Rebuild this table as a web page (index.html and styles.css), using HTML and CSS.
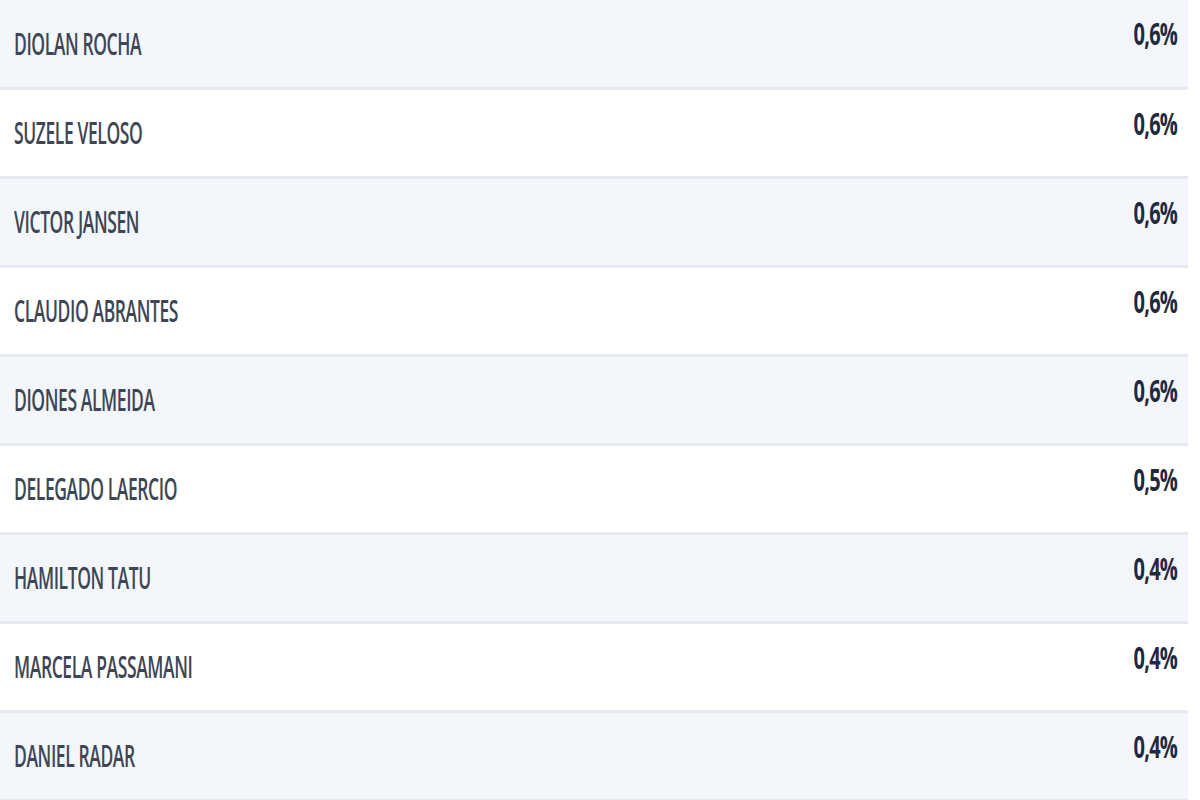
FILE: index.html
```html
<!DOCTYPE html>
<html lang="pt">
<head>
<meta charset="utf-8">
<title>Resultados</title>
<link rel="stylesheet" href="styles.css">
</head>
<body>
<ul class="list">
  <li class="row alt"><span class="name">DIOLAN ROCHA</span><span class="pct">0,6%</span></li>
  <li class="row"><span class="name">SUZELE VELOSO</span><span class="pct">0,6%</span></li>
  <li class="row alt"><span class="name">VICTOR JANSEN</span><span class="pct">0,6%</span></li>
  <li class="row"><span class="name">CLAUDIO ABRANTES</span><span class="pct">0,6%</span></li>
  <li class="row alt"><span class="name">DIONES ALMEIDA</span><span class="pct">0,6%</span></li>
  <li class="row"><span class="name">DELEGADO LAERCIO</span><span class="pct">0,5%</span></li>
  <li class="row alt"><span class="name">HAMILTON TATU</span><span class="pct">0,4%</span></li>
  <li class="row"><span class="name">MARCELA PASSAMANI</span><span class="pct">0,4%</span></li>
  <li class="row alt"><span class="name">DANIEL RADAR</span><span class="pct">0,4%</span></li>
</ul>
</body>
</html>
```
FILE: styles.css
```css
html, body {
  margin: 0;
  padding: 0;
  background: #ffffff;
}
body {
  font-family: "Open Sans", "Liberation Sans", sans-serif;
  width: 1200px;
  height: 800px;
  overflow: hidden;
}
.list {
  list-style: none;
  margin: 0;
  padding: 0;
  width: 1188px;
}
.row {
  display: flex;
  justify-content: space-between;
  align-items: center;
  height: 86px;
  border-bottom: 3px solid #e6eaf0;
  padding: 0 11px 0 14px;
  background: #ffffff;
}
.row:first-child {
  height: 87px;
}
.row.alt {
  background: #f3f6fa;
}
.name {
  display: inline-block;
  font-size: 17.5px;
  font-weight: 600;
  color: #3e4654;
  letter-spacing: -0.4px;
  transform: scaleY(1.7);
  transform-origin: left center;
  margin-top: -2px;
}
.pct {
  display: inline-block;
  font-size: 20px;
  font-weight: 700;
  color: #1f2a3d;
  letter-spacing: -0.8px;
  transform: scaleY(1.5);
  transform-origin: right center;
  margin-top: -20px;
}
```
